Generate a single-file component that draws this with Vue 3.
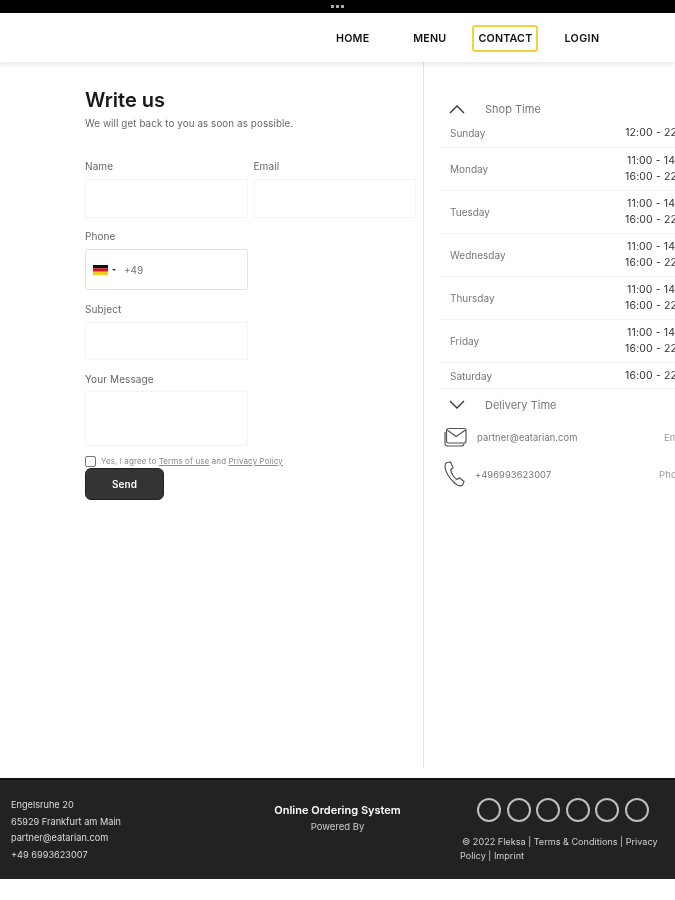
<template>
  <div class="page">
    <div class="topbar"><span class="dots"><i></i><i></i><i></i></span></div>
    <header class="header">
      <nav class="nav">
        <a class="link home">HOME</a>
        <a class="link menu">MENU</a>
        <a class="link contact">CONTACT</a>
        <a class="link login">LOGIN</a>
      </nav>
    </header>
    <main class="main">
      <section class="form">
        <h1 class="title">Write us</h1>
        <p class="sub">We will get back to you as soon as possible.</p>
        <div class="pair">
          <label class="field name-field"><span class="lab">Name</span><span class="input"></span></label>
          <label class="field email-field"><span class="lab">Email</span><span class="input"></span></label>
        </div>
        <label class="field phone-field">
          <span class="lab">Phone</span>
          <span class="input phone">
            <svg class="flag" width="15" height="10" viewBox="0 0 15 10"><rect width="15" height="3.4" fill="#111"/><rect y="3.4" width="15" height="3.3" fill="#d8101c"/><rect y="6.7" width="15" height="3.3" fill="#f7cc1a"/></svg>
            <span class="caret"></span>
            <span class="code">+49</span>
          </span>
        </label>
        <label class="field subject-field"><span class="lab">Subject</span><span class="input short"></span></label>
        <label class="field message-field"><span class="lab">Your Message</span><span class="input area"></span></label>
        <div class="agree">
          <span class="check"></span>
          <span>Yes, I agree to <u>Terms of use</u> and <u>Privacy Policy</u></span>
        </div>
        <button class="send" type="button">Send</button>
      </section>
      <aside class="side">
        <div class="acc open">
          <svg width="16" height="10" viewBox="0 0 16 10"><path d="M1 9 L8 2 L15 9" fill="none" stroke="#333" stroke-width="1.3"/></svg>
          <span>Shop Time</span>
        </div>
        <div v-for="d in days" :key="d.name" class="day" :class="{ double: d.times.length > 1, first: d.name === 'Sunday' }">
          <span class="dname">{{ d.name }}</span>
          <span class="times"><span v-for="t in d.times" :key="t" class="time">{{ t }}</span></span>
        </div>
        <div class="acc closed">
          <svg width="16" height="10" viewBox="0 0 16 10"><path d="M1 1 L8 8 L15 1" fill="none" stroke="#333" stroke-width="1.3"/></svg>
          <span>Delivery Time</span>
        </div>
        <div class="contact-row mail">
          <svg class="ic" width="23" height="20" viewBox="0 0 23 20" fill="none" stroke="#555" stroke-width="1.2"><rect x="2.5" y="1.5" width="19.5" height="14.5" rx="2"/><path d="M3 3 L12.2 9.5 L21.5 3"/><path d="M1 5 V16.5 A2.5 2.5 0 0 0 3.5 19 H18 A2.5 2.5 0 0 0 20 16.5"/></svg>
          <span class="cval">partner@eatarian.com</span>
          <span class="ckey">Email</span>
        </div>
        <div class="contact-row tel">
          <svg class="ic" width="21" height="26" viewBox="0 0 21 26" fill="none" stroke="#555" stroke-width="1.2"><path d="M3 1.5 L6.5 1 L9 6.5 L6.8 8.6 C7 12 10 17 13 18.6 L15.5 16.8 L20 20.5 L18.5 24 C17 25.5 13.5 25 10 21.5 C5 16.5 1 10 1 5 C1 3.5 2 2 3 1.5 Z"/></svg>
          <span class="cval">+496993623007</span>
          <span class="ckey">Phone</span>
        </div>
      </aside>
    </main>
    <footer class="footer">
      <div class="addr">
        <span>Engelsruhe 20</span>
        <span>65929 Frankfurt am Main</span>
        <span>partner@eatarian.com</span>
        <span>+49 6993623007</span>
      </div>
      <div class="powered">
        <strong>Online Ordering System</strong>
        <span>Powered By</span>
      </div>
      <div class="social">
        <div class="circles"><i v-for="n in 6" :key="n"></i></div>
        <p>© 2022 Fleksa | Terms &amp; Conditions | Privacy Policy | Imprint</p>
      </div>
    </footer>
  </div>
</template>

<script setup>
const two = ['11:00 - 14:00', '16:00 - 22:00']
const days = [
  { name: 'Sunday', times: ['12:00 - 22:00'] },
  { name: 'Monday', times: two },
  { name: 'Tuesday', times: two },
  { name: 'Wednesday', times: two },
  { name: 'Thursday', times: two },
  { name: 'Friday', times: two },
  { name: 'Saturday', times: ['16:00 - 22:00'] }
]
</script>

<style>
html, body { margin: 0; background: #fff; }
</style>

<style scoped>
.page { width: 675px; height: 900px; overflow: hidden; font-family: Inter, "Liberation Sans", sans-serif; color: #222; background: #fff; filter: blur(.4px); }
.topbar { height: 13px; background: #000; display: flex; justify-content: center; align-items: center; }
.dots { display: flex; gap: 2px; margin-bottom: 1px; }
.dots i { width: 3px; height: 3px; background: #aaa; display: block; }
.header { height: 49px; background: #fff; box-shadow: 0 2px 6px rgba(0,0,0,.1); display: flex; position: relative; z-index: 1; }
.nav { display: flex; align-items: center; margin-left: 336px; margin-top: 1px; font-size: 10.7px; font-weight: 600; color: #111; letter-spacing: .2px; }
.link { display: block; white-space: nowrap; }
.menu { margin-left: 44px; }
.contact { margin-left: 26px; padding: 5px 4px 5px 4px; border: 2px solid #f5cf3c; border-radius: 3px; }
.login { margin-left: 26px; letter-spacing: .4px; }
.main { height: 706px; display: flex; }
.form { width: 424px; box-sizing: border-box; padding: 26px 7px 0 85px; border-right: 1px solid #e6e6e6; }
.title { margin: 0; font-size: 20px; line-height: 24px; font-weight: 600; color: #181818; }
.sub { margin: 5px 0 0; font-size: 9.8px; line-height: 14px; color: #666; letter-spacing: .1px; }
.pair { display: flex; gap: 6px; margin-top: 28px; }
.field { display: block; }
.name-field, .email-field { width: 163px; }
.phone-field { margin-top: 11px; width: 163px; }
.subject-field { margin-top: 12px; width: 163px; }
.message-field { margin-top: 12px; width: 163px; }
.lab { display: block; font-size: 10px; line-height: 14px; color: #666; margin-bottom: 6px; letter-spacing: .1px; }
.message-field .lab { margin-bottom: 5px; }
.input { display: block; box-sizing: border-box; height: 39px; border: 1px solid #f3f3f3; border-radius: 2px; background: #fff; }
.short { height: 38px; }
.phone { height: 41px; border-color: #e2e2e2; display: flex; align-items: center; padding-left: 7px; }
.caret { width: 0; height: 0; border-left: 2px solid transparent; border-right: 2px solid transparent; border-top: 2px solid #333; margin-left: 4px; }
.code { font-size: 10px; color: #777; margin-left: 8px; }
.area { height: 55px; }
.agree { display: flex; align-items: center; gap: 5px; margin-top: 9px; font-size: 8px; line-height: 12px; color: #888; letter-spacing: .1px; }
.check { width: 9px; height: 9px; border: 1px solid #777; border-radius: 2px; display: block; }
.send { display: block; width: 79px; height: 32px; margin-top: 1px; background: #333; color: #fff; border: 1px solid #222; border-radius: 6px; font: 600 10px Inter, "Liberation Sans", sans-serif; }
.side { flex: 0 0 251px; box-sizing: border-box; padding: 37px 0 0 16px; overflow: hidden; }
.acc { display: flex; align-items: center; gap: 20px; padding-left: 9px; font-size: 11px; color: #777; height: 20px; }
.acc.closed { height: 32px; }
.day { width: 260px; box-sizing: border-box; display: flex; justify-content: space-between; align-items: center; height: 26px; padding: 0 4px 0 10px; border-bottom: 1px solid #f0f0f0; font-size: 10px; color: #777; }
.day.first { height: 29px; }
.day.double { height: 43px; }
.times { display: flex; flex-direction: column; align-items: center; width: 73px; color: #333; line-height: 16px; font-size: 10.5px; letter-spacing: .15px; }
.time { white-space: nowrap; }
.contact-row { display: flex; align-items: center; width: 260px; font-size: 9.3px; color: #777; position: relative; letter-spacing: .1px; }
.mail { height: 32px; padding-left: 4px; }
.tel { height: 42px; padding-left: 4px; }
.cval { margin-left: 10px; }
.ckey { position: absolute; font-size: 9.5px; color: #999; left: 224px; white-space: nowrap; }
.tel .ckey { left: 219px; }
.footer { margin-top: 10px; height: 101px; box-sizing: border-box; background: #222; border-top: 2px solid #111; color: #ddd; display: flex; position: relative; }
.addr { width: 264px; box-sizing: border-box; padding: 17px 0 0 11px; display: flex; flex-direction: column; font-size: 9.2px; line-height: 16.6px; }
.powered { width: 147px; padding-top: 22px; display: flex; flex-direction: column; align-items: center; font-size: 9.5px; line-height: 15px; color: #ccc; }
.powered strong { color: #fff; font-size: 11px; font-weight: 600; white-space: nowrap; line-height: 17px; }
.social { margin-left: 49px; width: 215px; box-sizing: border-box; padding-top: 18px; }
.circles { display: flex; gap: 5.6px; margin-left: 17px; }
.circles i { width: 24px; height: 24px; box-sizing: border-box; border: 2px solid #bdbdbd; border-radius: 50%; display: block; }
.social p { margin: 13px 0 0; font-size: 9.1px; line-height: 14px; color: #d0d0d0; text-indent: 2px; }
</style>
